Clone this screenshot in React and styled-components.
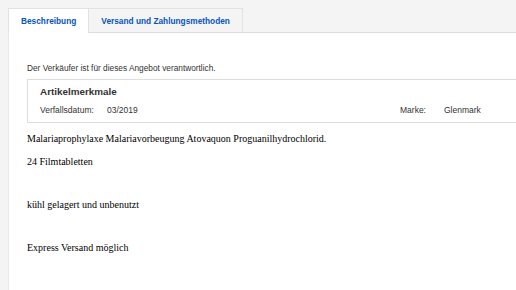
import styled, { createGlobalStyle } from 'styled-components';

const GlobalStyle = createGlobalStyle`
  html, body {
    margin: 0;
    padding: 0;
    background: #f4f4f4;
  }
  body {
    font-family: "Liberation Sans", Arial, sans-serif;
    color: #333;
  }
`

const tabs = ['Beschreibung', 'Versand und Zahlungsmethoden'];

const features = [
  { label: 'Verfallsdatum:', value: '03/2019', width: 67 },
  { label: 'Marke:', value: 'Glenmark', width: 44 },
];

const description = [
  'Malariaprophylaxe Malariavorbeugung Atovaquon Proguanilhydrochlorid.',
  '24 Filmtabletten',
  '',
  'kühl gelagert und unbenutzt',
  '',
  'Express Versand möglich',
];

function App() {
  return (
    <>
      <GlobalStyle />
      <StPage>
        <StTabBar>
          {tabs.map((tab, i) => (
            <StTab key={tab} $active={i === 0}>{tab}</StTab>
          ))}
        </StTabBar>
        <StPanel>
          <StNotice>Der Verkäufer ist für dieses Angebot verantwortlich.</StNotice>
          <StFeatureBox>
            <StFeatureTitle>Artikelmerkmale</StFeatureTitle>
            <StFeatureRow>
              {features.map(f => (
                <StFeature key={f.label}>
                  <StFeatureLabel $width={f.width}>{f.label}</StFeatureLabel>
                  <span>{f.value}</span>
                </StFeature>
              ))}
            </StFeatureRow>
          </StFeatureBox>
          <StDescription>
            {description.map((line, i) =>
              line ? <StParagraph key={i}>{line}</StParagraph> : <StSpacer key={i} />
            )}
          </StDescription>
        </StPanel>
      </StPage>
    </>
  )
}

export default App

const StPage = styled.div`
  padding: 8px 0 0 8px;
  min-height: 282px;
  display: flex;
  flex-direction: column;
`

const StTabBar = styled.div`
  display: flex;
  height: 24px;
  border-bottom: 1px solid #dddddd;
`

const StTab = styled.div`
  display: flex;
  align-items: center;
  padding: 0 12px;
  font-size: 8.3px;
  font-weight: bold;
  color: #0654ba;
  border: 1px solid #e2e2e2;
  border-bottom: none;
  margin-bottom: ${p => (p.$active ? '-1px' : '0')};
  background: ${p => (p.$active ? '#ffffff' : '#f4f4f4')};
  ${p => !p.$active && 'border-left: none;'}
`

const StPanel = styled.div`
  flex: 1;
  background: #ffffff;
  border-left: 1px solid #e8e8e8;
  padding: 30px 0 0 18px;
`

const StNotice = styled.div`
  font-size: 8.3px;
  color: #333;
  margin-bottom: 6px;
`

const StFeatureBox = styled.div`
  border: 1px solid #dddddd;
  border-right: none;
  padding: 6px 0 7px 12px;
`

const StFeatureTitle = styled.div`
  font-size: 9.9px;
  font-weight: bold;
  color: #333;
  margin-bottom: 8px;
`

const StFeatureRow = styled.div`
  display: grid;
  grid-template-columns: 360px 1fr;
  font-size: 8.5px;
  color: #333;
`

const StFeature = styled.div`
  display: flex;
`

const StFeatureLabel = styled.span`
  width: ${p => p.$width}px;
  flex-shrink: 0;
`

const StDescription = styled.div`
  font-family: "Liberation Serif", "Times New Roman", serif;
  font-size: 10px;
  color: #000;
  padding-top: 10px;
`

const StParagraph = styled.p`
  margin: 0 0 11px;
  line-height: 12px;
`

const StSpacer = styled.div`
  height: 9px;
  margin-bottom: 11px;
`
